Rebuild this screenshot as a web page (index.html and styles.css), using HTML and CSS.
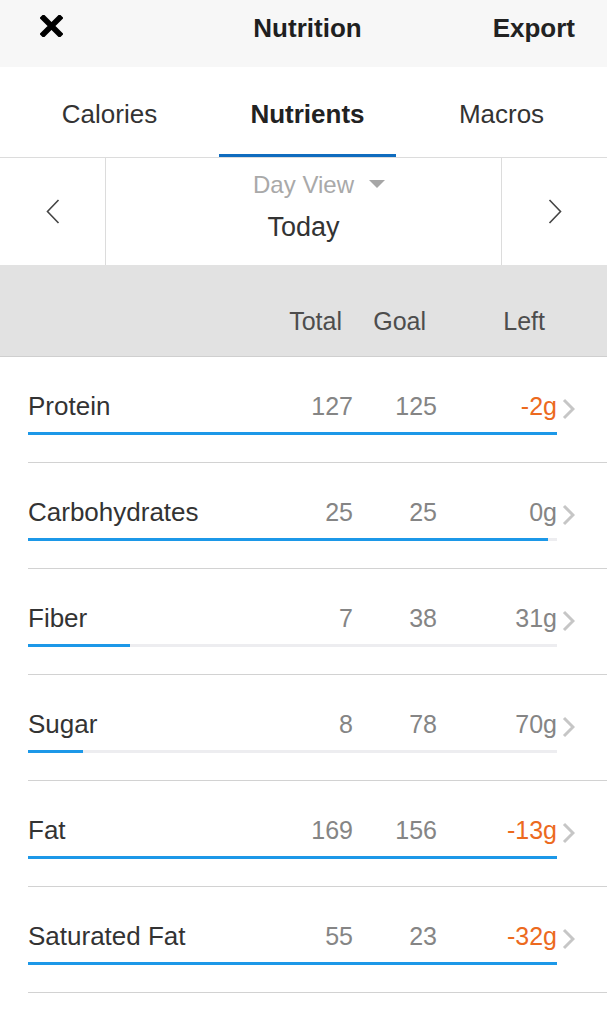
FILE: index.html
```html
<!DOCTYPE html>
<html lang="en">
<head>
<meta charset="utf-8">
<title>Nutrition</title>
<link rel="stylesheet" href="styles.css">
</head>
<body>
<div class="app">
  <header class="topbar">
    <span class="close-btn" aria-label="Close">
      <svg width="23" height="22" viewBox="0 0 23 22"><path d="M3.5 3 L19.5 19 M19.5 3 L3.5 19" stroke="#000" stroke-width="5.6" stroke-linecap="square" fill="none"/></svg>
    </span>
    <h1 class="title">Nutrition</h1>
    <span class="export">Export</span>
  </header>

  <nav class="tabs">
    <div class="tab">Calories</div>
    <div class="tab active">Nutrients</div>
    <div class="tab">Macros</div>
  </nav>

  <section class="dayview">
    <div class="nav-btn">
      <svg width="14" height="25" viewBox="0 0 14 25"><path d="M12.5 1 L1.5 12.5 L12.5 24" stroke="#444" stroke-width="1.6" fill="none"/></svg>
    </div>
    <div class="day-center">
      <div class="day-label"><span class="day-label-text">Day View</span></div>
      <div class="day-value">Today</div>
    </div>
    <div class="nav-btn">
      <svg width="14" height="25" viewBox="0 0 14 25"><path d="M1.5 1 L12.5 12.5 L1.5 24" stroke="#444" stroke-width="1.6" fill="none"/></svg>
    </div>
  </section>

  <div class="colhead">
    <div class="colhead-inner">
      <span class="c-name"></span>
      <span class="c-total">Total</span>
      <span class="c-goal">Goal</span>
      <span class="c-left">Left</span>
    </div>
  </div>

  <ul class="list">
    <li class="row">
      <div class="line"><span class="c-name">Protein</span><span class="c-total num">127</span><span class="c-goal num">125</span><span class="c-left num over">-2g</span></div>
      <svg class="chev" width="13" height="22" viewBox="0 0 13 22"><path d="M2 2 L11 11 L2 20" stroke="#c6c6c6" stroke-width="3" fill="none"/></svg>
      <div class="track"><div class="fill" style="width:100%"></div></div>
    </li>
    <li class="row">
      <div class="line"><span class="c-name">Carbohydrates</span><span class="c-total num">25</span><span class="c-goal num">25</span><span class="c-left num">0g</span></div>
      <svg class="chev" width="13" height="22" viewBox="0 0 13 22"><path d="M2 2 L11 11 L2 20" stroke="#c6c6c6" stroke-width="3" fill="none"/></svg>
      <div class="track"><div class="fill" style="width:98.3%"></div></div>
    </li>
    <li class="row">
      <div class="line"><span class="c-name">Fiber</span><span class="c-total num">7</span><span class="c-goal num">38</span><span class="c-left num">31g</span></div>
      <svg class="chev" width="13" height="22" viewBox="0 0 13 22"><path d="M2 2 L11 11 L2 20" stroke="#c6c6c6" stroke-width="3" fill="none"/></svg>
      <div class="track"><div class="fill" style="width:19.3%"></div></div>
    </li>
    <li class="row">
      <div class="line"><span class="c-name">Sugar</span><span class="c-total num">8</span><span class="c-goal num">78</span><span class="c-left num">70g</span></div>
      <svg class="chev" width="13" height="22" viewBox="0 0 13 22"><path d="M2 2 L11 11 L2 20" stroke="#c6c6c6" stroke-width="3" fill="none"/></svg>
      <div class="track"><div class="fill" style="width:10.4%"></div></div>
    </li>
    <li class="row">
      <div class="line"><span class="c-name">Fat</span><span class="c-total num">169</span><span class="c-goal num">156</span><span class="c-left num over">-13g</span></div>
      <svg class="chev" width="13" height="22" viewBox="0 0 13 22"><path d="M2 2 L11 11 L2 20" stroke="#c6c6c6" stroke-width="3" fill="none"/></svg>
      <div class="track"><div class="fill" style="width:100%"></div></div>
    </li>
    <li class="row">
      <div class="line"><span class="c-name">Saturated Fat</span><span class="c-total num">55</span><span class="c-goal num">23</span><span class="c-left num over">-32g</span></div>
      <svg class="chev" width="13" height="22" viewBox="0 0 13 22"><path d="M2 2 L11 11 L2 20" stroke="#c6c6c6" stroke-width="3" fill="none"/></svg>
      <div class="track"><div class="fill" style="width:100%"></div></div>
    </li>
  </ul>
</div>
</body>
</html>
```

FILE: styles.css
```css
* { box-sizing: border-box; }

html, body {
  margin: 0;
  padding: 0;
  background: #ffffff;
}

body {
  font-family: "Liberation Sans", Arial, sans-serif;
  color: #333;
  width: 607px;
  overflow: hidden;
}

.app {
  width: 607px;
}

/* Top bar */
.topbar {
  height: 67px;
  background: #f7f7f7;
  display: grid;
  grid-template-columns: 1fr auto 1fr;
  align-items: center;
  padding: 13px 32px 24px 40px;
}

.close-btn {
  display: flex;
  justify-self: start;
  margin-bottom: 4px;
}

.title {
  margin: 0;
  font-size: 26px;
  line-height: 30px;
  font-weight: bold;
  color: #1f1f1f;
}

.export {
  justify-self: end;
  font-size: 26px;
  line-height: 30px;
  font-weight: bold;
  color: #222;
}

/* Tabs */
.tabs {
  display: grid;
  grid-template-columns: 219px 177px 1fr;
  border-bottom: 1px solid #dcdcdc;
  background: #fff;
}

.tab {
  height: 90px;
  padding-top: 32px;
  text-align: center;
  font-size: 26px;
  line-height: 30px;
  color: #333;
}

.tab.active {
  font-weight: bold;
  color: #222;
  border-bottom: 3px solid #0f6cbf;
}

/* Day view */
.dayview {
  display: grid;
  grid-template-columns: 105px 1fr 105px;
  height: 107px;
  background: #fff;
}

.nav-btn {
  display: flex;
  align-items: center;
  justify-content: center;
}

.day-center {
  border-left: 1px solid #dcdcdc;
  border-right: 1px solid #dcdcdc;
  text-align: center;
  padding-top: 13px;
}

.day-label {
  font-size: 24px;
  line-height: 28px;
  color: #a9a9a9;
}

.day-label-text {
  position: relative;
}

.day-label-text::after {
  content: "";
  position: absolute;
  left: calc(100% + 15px);
  top: 9px;
  width: 0;
  height: 0;
  border-left: 8.5px solid transparent;
  border-right: 8.5px solid transparent;
  border-top: 8px solid #a6a6a6;
}

.day-value {
  margin-top: 12px;
  font-size: 27px;
  line-height: 32px;
  color: #333;
}

/* Column header */
.colhead {
  background: #e2e2e2;
  height: 92px;
  border-bottom: 1px solid #cfcfcf;
  padding: 41px 50px 0 28px;
}

.colhead-inner {
  display: flex;
  font-size: 25px;
  line-height: 30px;
  color: #4d4d4d;
}

.colhead-inner .c-total { padding-right: 11px; }
.colhead-inner .c-goal { padding-right: 11px; }
.colhead-inner .c-left { padding-right: 12px; }

/* Columns */
.c-name { flex: 1; }
.c-total { width: 100px; text-align: right; }
.c-goal { width: 84px; text-align: right; }
.c-left { width: 120px; text-align: right; }

/* List */
.list {
  list-style: none;
  margin: 0;
  padding: 0;
}

.row {
  margin-left: 28px;
  height: 106px;
  border-bottom: 1px solid #d2d2d2;
  padding: 34px 32px 0 0;
  display: grid;
  grid-template-columns: 1fr 18px;
  grid-template-rows: 30px auto;
}

.line {
  display: flex;
  align-items: baseline;
  font-size: 26px;
  line-height: 30px;
  color: #333;
}

.num {
  font-size: 25px;
  color: #858585;
}

.num.over {
  color: #ec6a1e;
}

.chev {
  align-self: end;
  justify-self: end;
  margin-bottom: 1px;
}

.track {
  grid-column: 1;
  margin-top: 11px;
  height: 3px;
  background: #ededf0;
}

.fill {
  height: 3px;
  background: #1c98e8;
}
```
